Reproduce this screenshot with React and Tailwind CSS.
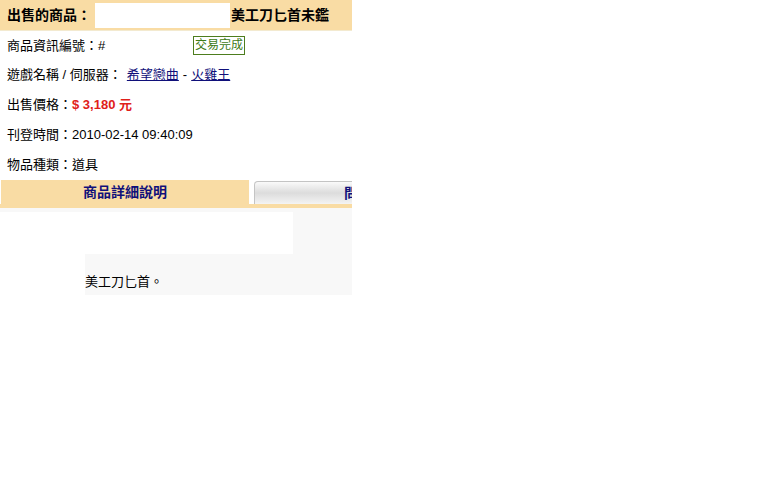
const FONT = "font-['Liberation_Sans','Noto_Sans_CJK_TC',sans-serif]";

function Row({ children }) {
  return <div className="h-[30px] flex items-center pl-[7px] text-[13px] text-black">{children}</div>;
}

export default function App() {
  return (
    <div className={`w-[768px] h-[480px] bg-white ${FONT}`}>
      <div className="w-[352px] overflow-hidden">
        {/* header */}
        <div className="h-[31px] bg-[#f9dca4] border-b border-[#f3ead0] flex items-center pl-[7px] text-[14px] font-bold text-black whitespace-nowrap">
          <span>出售的商品：</span>
          <span className="shrink-0 w-[135px] h-[25px] bg-white ml-[4px]" />
          <span className="ml-[1px]">美工刀匕首未鑑</span>
        </div>

        <div className="h-[29px] flex items-center pl-[7px] text-[13px]">
          <span className="w-[186px]">商品資訊編號：#</span>
          <span className="border border-[#4d7d1e] text-[#3e7a16] text-[12px] leading-[17px] px-[1px]">交易完成</span>
        </div>
        <Row>
          遊戲名稱 / 伺服器：
          <a className="ml-[5px] text-[#10107a] underline">希望戀曲</a>
          <span className="mx-[4px]">-</span>
          <a className="text-[#10107a] underline">火雞王</a>
        </Row>
        <Row>
          出售價格：<span className="font-bold text-[#e0201a]">$ 3,180 元</span>
        </Row>
        <Row>刊登時間：2010-02-14 09:40:09</Row>
        <Row>物品種類：道具</Row>

        {/* tabs */}
        <div className="flex items-end h-[24px]">
          <div className="shrink-0 ml-[1px] w-[248px] h-[24px] bg-[#f9dca4] flex items-center justify-center text-[14px] font-bold text-[#10107a]">
            商品詳細說明
          </div>
          <div className="shrink-0 ml-[5px] w-[222px] h-[23px] rounded-tl-[4px] border border-b-0 border-[#c4c4c4] bg-gradient-to-b from-[#fafafa] via-[#dcdcdc] to-[#f4f4f4] flex items-center justify-center text-[14px] text-[#10107a] font-bold">
            問與答
          </div>
        </div>
        <div className="h-[4px] bg-[#f9dca4]" />

        {/* detail */}
        <div className="bg-[#f8f8f8] pt-[4px] h-[87px]">
          <div className="w-[293px] h-[42px] bg-white" />
          <div className="flex h-[41px]">
            <div className="w-[85px] bg-white" />
            <div className="flex-1 flex items-end pb-[4px] text-[13px] text-black">美工刀匕首。</div>
          </div>
        </div>
      </div>
    </div>
  );
}
